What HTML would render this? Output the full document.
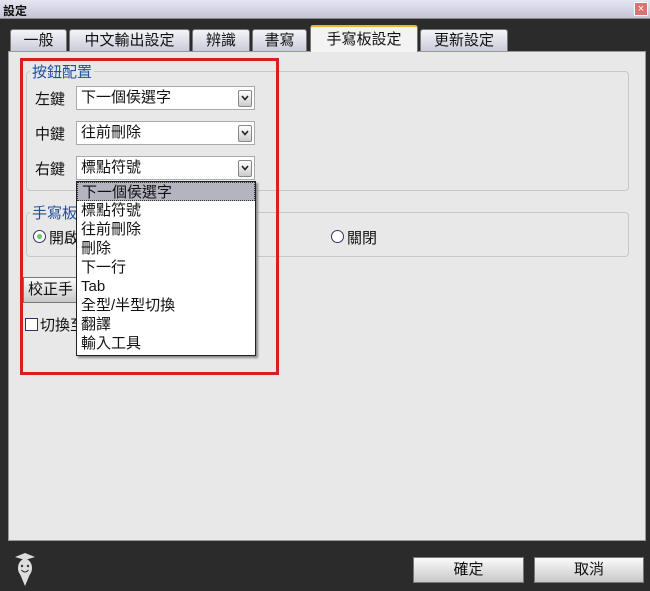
<!DOCTYPE html>
<html><head><meta charset="utf-8"><style>
*{margin:0;padding:0;box-sizing:border-box}
body{width:650px;height:591px;background:#2b2b2b;position:relative;overflow:hidden;font-family:"Liberation Sans","Noto Sans CJK TC",sans-serif;font-size:15px;color:#111}
.a{position:absolute}
.title{left:0;top:0;width:650px;height:19px;background:linear-gradient(#e6e6f2,#c4c4d6);font-size:12px;font-weight:bold;padding:2px 3px;border-bottom:1px solid #888}
.close{right:2px;top:2px;width:14px;height:14px;background:#e07070;border:1px solid #fff;color:#fff;font-size:11px;line-height:12px;text-align:center}
.tab{top:29px;height:23px;background:linear-gradient(#f4f4f8,#c8cad8);border:1px solid #777;border-bottom:none;border-radius:3px 3px 0 0;text-align:center;font-size:15px;line-height:22px}
.tab.on{top:25px;height:27px;background:#f3f3f3;border-top:2px solid #f0b040;line-height:26px}
.panel{left:8px;top:51px;width:638px;height:490px;background:#e8e8e8;border:1px solid #999}
.grp{border:1px solid #c8c8c8;border-radius:4px}
.gl{color:#2050a0;font-size:15px;background:#e8e8e8;padding:0 2px}
.combo{left:76px;width:179px;height:24px;background:#fff;border:1px solid #aaa;padding-left:4px;line-height:22px}
.arr{right:2px;top:3px;width:14px;height:17px;border:1px solid #888;border-radius:2px;background:linear-gradient(#fff,#ccc)}
.arr svg{position:absolute;left:2px;top:4px}
.dd{left:76px;top:181px;width:180px;height:175px;background:#fff;border:1px solid #222;box-shadow:2px 2px 2px #888}
.dd div{height:19px;line-height:19px;padding-left:4px}
.btn{height:26px;background:linear-gradient(#fafafa,#c8c8c8);border:1px solid #777;text-align:center;line-height:24px}
</style></head><body>
<div class="a title">設定</div>
<div class="a close">×</div>
<div class="a tab" style="left:10px;width:57px">一般</div>
<div class="a tab" style="left:69px;width:121px">中文輸出設定</div>
<div class="a tab" style="left:192px;width:58px">辨識</div>
<div class="a tab" style="left:252px;width:55px">書寫</div>
<div class="a tab" style="left:420px;width:88px">更新設定</div>
<div class="a panel"></div>
<div class="a tab on" style="left:310px;width:108px">手寫板設定</div>
<div class="a grp" style="left:26px;top:71px;width:603px;height:120px"></div>
<div class="a gl" style="left:30px;top:61px">按鈕配置</div>
<div class="a" style="left:35px;top:88px">左鍵</div>
<div class="a combo" style="top:86px">下一個侯選字<div class="a arr"><svg width="8" height="6"><path d="M1 1L4 4.5L7 1" stroke="#222" stroke-width="1.6" fill="none"/></svg></div></div>
<div class="a" style="left:35px;top:123px">中鍵</div>
<div class="a combo" style="top:121px">往前刪除<div class="a arr"><svg width="8" height="6"><path d="M1 1L4 4.5L7 1" stroke="#222" stroke-width="1.6" fill="none"/></svg></div></div>
<div class="a" style="left:35px;top:158px">右鍵</div>
<div class="a combo" style="top:156px">標點符號<div class="a arr"><svg width="8" height="6"><path d="M1 1L4 4.5L7 1" stroke="#222" stroke-width="1.6" fill="none"/></svg></div></div>
<div class="a grp" style="left:26px;top:212px;width:603px;height:45px"></div>
<div class="a gl" style="left:30px;top:202px">手寫板</div>
<div class="a" style="left:33px;top:230px;width:13px;height:13px;border:1px solid #336;border-radius:50%;background:radial-gradient(#6c6 30%,#fff 35%)"></div>
<div class="a" style="left:49px;top:227px">開啟</div>
<div class="a" style="left:331px;top:230px;width:13px;height:13px;border:1px solid #336;border-radius:50%;background:#fff"></div>
<div class="a" style="left:347px;top:227px">關閉</div>
<div class="a btn" style="left:23px;top:277px;width:60px;text-align:left;padding-left:4px">校正手</div>
<div class="a" style="left:25px;top:318px;width:13px;height:13px;border:1px solid #336;background:#fff"></div>
<div class="a" style="left:40px;top:314px">切換至</div>
<div class="a" style="left:20px;top:58px;width:259px;height:317px;border:3px solid #d81e1e"></div>
<div class="a dd"><div style="background:#b4b4c0;border:1px dotted #333">下一個侯選字</div><div>標點符號</div><div>往前刪除</div><div>刪除</div><div>下一行</div><div>Tab</div><div>全型/半型切換</div><div>翻譯</div><div>輸入工具</div></div>
<svg class="a" style="left:13px;top:552px" width="24" height="36"><path d="M2 5L12 1L22 5L12 8Z" fill="#ddd"/><ellipse cx="12" cy="16" rx="7" ry="9" fill="#ddd"/><path d="M7 22L12 34L17 22Z" fill="#ddd"/><circle cx="9" cy="14" r="1.2" fill="#333"/><circle cx="15" cy="14" r="1.2" fill="#333"/><path d="M8.5 18Q12 22 15.5 18" stroke="#333" fill="none"/></svg>
<div class="a btn" style="left:413px;top:557px;width:111px">確定</div>
<div class="a btn" style="left:534px;top:557px;width:110px">取消</div>
</body></html>
